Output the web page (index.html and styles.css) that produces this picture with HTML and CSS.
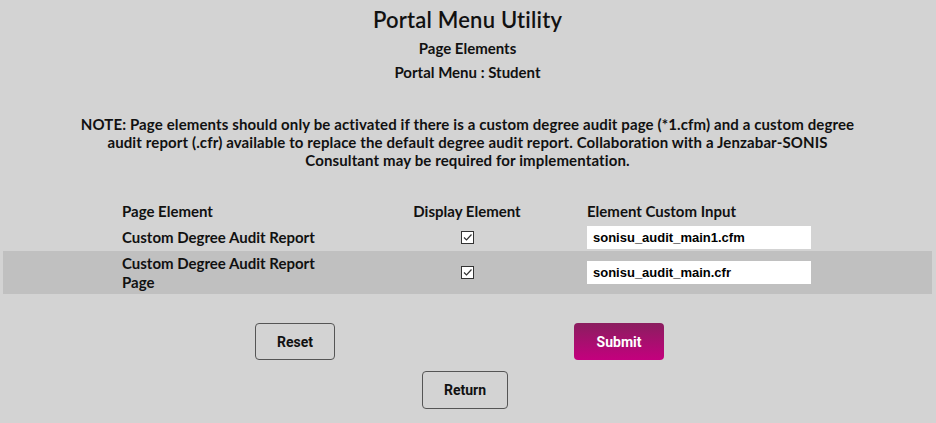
FILE: index.html
```html
<!DOCTYPE html>
<html>
<head>
<meta charset="utf-8">
<link rel="stylesheet" href="styles.css">
</head>
<body>
<div class="page">
  <h1 class="title">Portal Menu Utility</h1>
  <div class="subtitle">Page Elements</div>
  <div class="subtitle second">Portal Menu : Student</div>
  <p class="note">NOTE: Page elements should only be activated if there is a custom degree audit page (*1.cfm) and a custom degree audit report (.cfr) available to replace the default degree audit report. Collaboration with a Jenzabar-SONIS Consultant may be required for implementation.</p>

  <div class="grid">
    <div class="row head">
      <div class="c-name">Page Element</div>
      <div class="c-check">Display Element</div>
      <div class="c-input">Element Custom Input</div>
    </div>
    <div class="row first">
      <div class="c-name">Custom Degree Audit Report</div>
      <div class="c-check"><span class="box"><svg width="13" height="13" viewBox="0 0 13 13"><path d="M3 6.5 L5.5 9 L10.5 3.5" fill="none" stroke="#333" stroke-width="1.2"/></svg></span></div>
      <div class="c-input"><span class="field">sonisu_audit_main1.cfm</span></div>
    </div>
    <div class="row alt">
      <div class="c-name">Custom Degree Audit Report Page</div>
      <div class="c-check"><span class="box"><svg width="13" height="13" viewBox="0 0 13 13"><path d="M3 6.5 L5.5 9 L10.5 3.5" fill="none" stroke="#333" stroke-width="1.2"/></svg></span></div>
      <div class="c-input"><span class="field">sonisu_audit_main.cfr</span></div>
    </div>
  </div>

  <div class="actions">
    <button class="btn reset">Reset</button>
    <button class="btn submit">Submit</button>
  </div>
  <div class="actions single">
    <button class="btn ret">Return</button>
  </div>
</div>
</body>
</html>
```

FILE: styles.css
```css
html, body {
  margin: 0;
  padding: 0;
  background: #d3d3d3;
}
body {
  font-family: Lato, "Noto Sans", sans-serif;
  color: #111;
}
.page {
  padding: 9px 4px 0 3px;
}
.title {
  margin: 0;
  text-align: center;
  font-size: 22px;
  font-weight: 600;
  line-height: 22px;
  letter-spacing: 0.2px;
}
.subtitle {
  text-align: center;
  font-size: 15px;
  font-weight: 700;
  line-height: 16px;
  margin-top: 9px;
}
.subtitle.second {
  margin-top: 8px;
}
.note {
  width: 790px;
  margin: 35px auto 0;
  text-align: center;
  font-size: 15px;
  font-weight: 700;
  line-height: 18px;
  letter-spacing: 0.12px;
}
.grid {
  margin-top: 29px;
  font-size: 15px;
  font-weight: 700;
}
.row {
  display: grid;
  grid-template-columns: 119px 215px 43px 174px 1fr;
  align-items: center;
  min-height: 27px;
}
.row.head {
  min-height: 26px;
}
.row.alt {
  background: #c0c0c0;
  min-height: 43px;
}
.c-name {
  grid-column: 2;
  line-height: 19px;
}
.c-check {
  grid-column: 4;
  text-align: center;
  line-height: 0;
}
.head .c-check {
  line-height: 19px;
}
.c-input {
  grid-column: 5;
  padding-left: 33px;
}
.box {
  display: inline-block;
  width: 11px;
  height: 11px;
  border: 1px solid #333;
  background: #fff;
  position: relative;
}
.box svg {
  position: absolute;
  left: -1px;
  top: -1px;
}
.field {
  display: block;
  width: 218px;
  height: 23px;
  line-height: 23px;
  padding-left: 6px;
  background: #fff;
  font-family: "Liberation Sans", Arial, sans-serif;
  font-size: 13px;
  font-weight: 700;
  color: #000;
}
.actions {
  display: flex;
  justify-content: center;
  gap: 239px;
  padding-right: 16px;
  margin-top: 29px;
}
.actions.single {
  margin-top: 11px;
  padding-right: 5px;
}
.btn {
  height: 37px;
  border-radius: 4px;
  font-family: Roboto, "Liberation Sans", sans-serif;
  font-size: 14px;
  font-weight: 700;
  cursor: pointer;
}
.reset, .ret {
  background: #d3d3d3;
  border: 1px solid #555;
  color: #111;
}
.reset { width: 80px; }
.ret { width: 86px; height: 38px; }
.submit {
  width: 90px;
  border: none;
  color: #fff;
  background: linear-gradient(#8a1e5f, #c4007e);
}
```
